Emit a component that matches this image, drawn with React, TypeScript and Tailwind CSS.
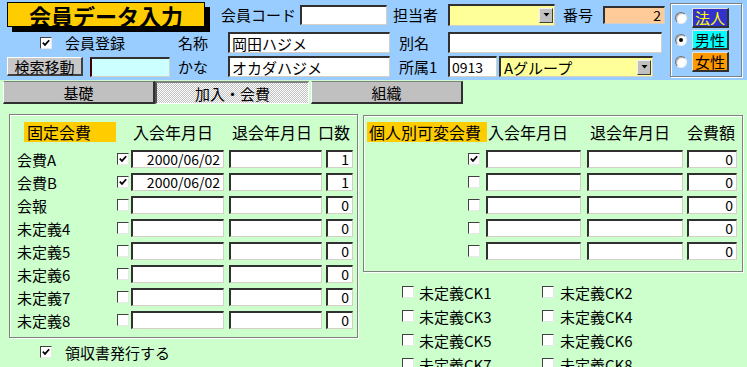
import React from "react";

function Check({ checked, className = "" }: { checked?: boolean; className?: string }) {
  return (
    <div
      className={`w-[12px] h-[12px] shrink-0 bg-white border-t border-l border-b border-r border-t-[#404040] border-l-[#404040] border-b-[#e8e8e8] border-r-[#e8e8e8] flex items-center justify-center ${className}`}
    >
      {checked && (
        <svg width="8" height="8" viewBox="0 0 8 8">
          <path d="M0.8 3.6 L3 5.9 L7.2 1.2" stroke="#000" strokeWidth="1.7" fill="none" />
        </svg>
      )}
    </div>
  );
}

function Field({
  className = "",
  children,
  right,
}: {
  className?: string;
  children?: React.ReactNode;
  right?: boolean;
}) {
  return (
    <div
      className={`shrink-0 border-t-2 border-l-2 border-b border-r border-t-[#303030] border-l-[#303030] border-b-[#d4d0c8] border-r-[#d4d0c8] flex items-center leading-[15px] whitespace-nowrap ${
        right ? "justify-end pr-[3px]" : "pl-[2px]"
      } ${className}`}
    >
      {children}
    </div>
  );
}

function DropBtn() {
  return (
    <div className="w-[14px] h-[15px] shrink-0 bg-[#c0c0c0] border-t border-l border-b border-r border-t-[#f0f0f0] border-l-[#f0f0f0] border-b-[#404040] border-r-[#404040] flex items-center justify-center">
      <svg width="7" height="4" viewBox="0 0 7 4">
        <path d="M0.5 0h6L3.5 3.5z" fill="#000" />
      </svg>
    </div>
  );
}

function Select({ className = "", text }: { className?: string; text?: string }) {
  return (
    <div
      className={`shrink-0 bg-[#ffff99] border-t-2 border-l-2 border-b border-r border-t-[#303030] border-l-[#303030] border-b-[#d4d0c8] border-r-[#d4d0c8] flex items-center justify-between pl-[3px] pr-[1px] text-[15px] leading-[15px] ${className}`}
    >
      <span>{text ?? ""}</span>
      <DropBtn />
    </div>
  );
}

function Radio({ on }: { on?: boolean }) {
  return (
    <div className="w-[12px] h-[12px] shrink-0 rounded-full bg-white border border-t-[#707070] border-l-[#707070] border-b-[#f0f0f0] border-r-[#f0f0f0] shadow-[inset_1px_1px_1px_#b0b0b0] flex items-center justify-center">
      {on && <div className="w-[4px] h-[4px] rounded-full bg-black" />}
    </div>
  );
}

const fixedRows: { label: string; checked: boolean; date: string; n: string }[] = [
  { label: "会費A", checked: true, date: "2000/06/02", n: "1" },
  { label: "会費B", checked: true, date: "2000/06/02", n: "1" },
  { label: "会報", checked: false, date: "", n: "0" },
  { label: "未定義4", checked: false, date: "", n: "0" },
  { label: "未定義5", checked: false, date: "", n: "0" },
  { label: "未定義6", checked: false, date: "", n: "0" },
  { label: "未定義7", checked: false, date: "", n: "0" },
  { label: "未定義8", checked: false, date: "", n: "0" },
];

const varRows = [true, false, false, false, false];

const ckRows = [
  ["未定義CK1", "未定義CK2"],
  ["未定義CK3", "未定義CK4"],
  ["未定義CK5", "未定義CK6"],
  ["未定義CK7", "未定義CK8"],
];

export default function App() {
  return (
    <div className="w-[747px] h-[367px] overflow-hidden bg-[#ccffcc] text-black font-['Noto_Sans_CJK_JP',sans-serif]">
      {/* header */}
      <div className="h-[80px] bg-[#99ccff] flex">
        <div className="w-[670px] flex flex-col">
          {/* row 1 */}
          <div className="mt-[2px] h-[25px] flex items-center">
            <div className="ml-[7px] w-[198px] h-[25px] shrink-0 bg-[#ffcc00] border border-black shadow-[5px_5px_0_#000] flex items-center justify-center text-[22px] font-bold leading-[22px]">
              会員データ入力
            </div>
            <div className="ml-[16px] w-[79px] text-[15px] leading-[15px]">会員コード</div>
            <Field className="w-[87px] h-[20px] bg-white" />
            <div className="ml-[6px] w-[55px] text-[15px] leading-[15px]">担当者</div>
            <Select className="w-[107px] h-[22px]" />
            <div className="ml-[8px] w-[40px] text-[15px] leading-[15px]">番号</div>
            <Field className="w-[62px] h-[18px] bg-[#ffcc99] text-[14px]" right>
              2
            </Field>
          </div>
          {/* row 2 */}
          <div className="mt-[5px] h-[21px] flex items-center">
            <Check checked className="ml-[40px]" />
            <div className="ml-[13px] w-[113px] text-[15px] leading-[15px]">会員登録</div>
            <div className="w-[50px] text-[15px] leading-[15px]">名称</div>
            <Field className="w-[162px] h-[21px] bg-white text-[15px]">岡田ハジメ</Field>
            <div className="ml-[9px] w-[49px] text-[15px] leading-[15px]">別名</div>
            <Field className="w-[214px] h-[21px] bg-white" />
          </div>
          {/* row 3 */}
          <div className="mt-[3px] h-[21px] flex items-center">
            <div className="ml-[7px] w-[76px] h-[19px] shrink-0 bg-[#c8c8c8] border-t border-l border-b-2 border-r-2 border-t-white border-l-white border-b-[#404040] border-r-[#404040] flex items-center justify-center text-[15px] leading-[15px]">
              検索移動
            </div>
            <Field className="ml-[7px] w-[80px] h-[20px] bg-[#ccffff] border-l-[#400000]" />
            <div className="ml-[8px] w-[50px] text-[15px] leading-[15px]">かな</div>
            <Field className="w-[162px] h-[21px] bg-white text-[15px]">オカダハジメ</Field>
            <div className="ml-[9px] w-[49px] text-[15px] leading-[15px]">所属1</div>
            <Field className="w-[49px] h-[21px] bg-white text-[14px]">0913</Field>
            <Select className="ml-[2px] w-[154px] h-[21px]" text="Aグループ" />
          </div>
        </div>
        {/* radio group */}
        <div className="mt-[3px] w-[72px] h-[74px] border border-[#808080] shadow-[inset_1px_1px_0_#ffffff,1px_1px_0_#ffffff] flex flex-col pt-[4px] gap-[2px]">
          <div className="h-[20px] flex items-center">
            <div className="ml-[4px]">
              <Radio />
            </div>
            <div className="ml-[5px] w-[37px] h-[20px] bg-[#3333cc] text-[#ffff00] border-t border-l border-b-2 border-r-2 border-t-[#e0e0e0] border-l-[#e0e0e0] border-b-[#303030] border-r-[#303030] flex items-center justify-center text-[15px] leading-[15px]">
              法人
            </div>
          </div>
          <div className="h-[20px] flex items-center">
            <div className="ml-[4px]">
              <Radio on />
            </div>
            <div className="ml-[5px] w-[37px] h-[20px] bg-[#00ffff] border-t border-l border-b-2 border-r-2 border-t-[#e0e0e0] border-l-[#e0e0e0] border-b-[#303030] border-r-[#303030] flex items-center justify-center text-[15px] leading-[15px]">
              男性
            </div>
          </div>
          <div className="h-[20px] flex items-center">
            <div className="ml-[4px]">
              <Radio />
            </div>
            <div className="ml-[5px] w-[37px] h-[20px] bg-[#ff9900] border-t border-l border-b-2 border-r-2 border-t-[#e0e0e0] border-l-[#e0e0e0] border-b-[#303030] border-r-[#303030] flex items-center justify-center text-[15px] leading-[15px]">
              女性
            </div>
          </div>
        </div>
      </div>

      {/* tabs */}
      <div className="h-[26px] flex items-start pt-[1px]">
        <div className="ml-[3px] w-[152px] h-[23px] bg-[#c0c0c0] border-t border-l border-b-2 border-r-2 border-t-[#808080] border-l-white border-b-[#303030] border-r-[#303030] flex items-center justify-center text-[15px] leading-[15px]">
          基礎
        </div>
        <div className="w-[154px] h-[23px] bg-[repeating-conic-gradient(#c0c0c0_0%_25%,#ffffff_0%_50%)] bg-[length:2px_2px] border-t-2 border-l-2 border-b border-r border-t-[#808080] border-l-[#505050] border-b-white border-r-white flex items-center justify-center text-[15px] leading-[15px]">
          加入・会費
        </div>
        <div className="ml-[2px] w-[152px] h-[23px] bg-[#c0c0c0] border-t border-l border-b-2 border-r-2 border-t-[#808080] border-l-white border-b-[#303030] border-r-[#303030] flex items-center justify-center text-[15px] leading-[15px]">
          組織
        </div>
      </div>

      {/* main */}
      <div className="flex">
        {/* left */}
        <div className="ml-[9px] mt-[8px] flex flex-col">
          <div className="w-[349px] h-[224px] border border-[#808080] shadow-[inset_1px_1px_0_#ffffff,1px_1px_0_#ffffff] flex flex-col">
            <div className="mt-[7px] h-[20px] flex items-center text-[16px] leading-[16px]">
              <div className="ml-[14px] w-[92px] h-[20px] bg-[#ffcc00] pl-[3px] flex items-center">固定会費</div>
              <div className="ml-[17px] w-[99px]">入会年月日</div>
              <div className="w-[86px]">退会年月日</div>
              <div>口数</div>
            </div>
            <div className="mt-[8px] flex flex-col gap-[5px]">
              {fixedRows.map((r) => (
                <div key={r.label} className="h-[18px] flex items-center">
                  <div className="ml-[7px] w-[100px] text-[15px] leading-[15px]">{r.label}</div>
                  <Check checked={r.checked} />
                  <Field className="ml-[2px] w-[93px] h-[18px] bg-white text-[14px]" right>
                    {r.date}
                  </Field>
                  <Field className="ml-[5px] w-[93px] h-[18px] bg-white" />
                  <Field className="ml-[4px] w-[27px] h-[18px] bg-white text-[14px]" right>
                    {r.n}
                  </Field>
                </div>
              ))}
            </div>
          </div>
          <div className="mt-[4px] h-[20px] flex items-center">
            <Check checked className="ml-[31px]" />
            <div className="ml-[13px] text-[15px] leading-[15px]">領収書発行する</div>
          </div>
        </div>

        {/* right */}
        <div className="ml-[5px] mt-[9px] flex flex-col">
          <div className="w-[380px] h-[157px] border border-[#808080] shadow-[inset_1px_1px_0_#ffffff,1px_1px_0_#ffffff] flex flex-col">
            <div className="mt-[6px] h-[20px] flex items-center text-[16px] leading-[16px]">
              <div className="ml-[3px] w-[120px] h-[20px] bg-[#ffcc00] pl-[2px] flex items-center">個人別可変会費</div>
              <div className="ml-[1px] w-[102px]">入会年月日</div>
              <div className="w-[97px]">退会年月日</div>
              <div>会費額</div>
            </div>
            <div className="mt-[8px] flex flex-col gap-[5px]">
              {varRows.map((c, i) => (
                <div key={i} className="h-[18px] flex items-center">
                  <Check checked={c} className="ml-[104px]" />
                  <Field className="ml-[6px] w-[95px] h-[18px] bg-white" />
                  <Field className="ml-[6px] w-[96px] h-[18px] bg-white" />
                  <Field className="ml-[4px] w-[50px] h-[18px] bg-white text-[14px]" right>
                    0
                  </Field>
                </div>
              ))}
            </div>
          </div>
          <div className="mt-[10px] flex flex-col gap-[4px]">
            {ckRows.map((row) => (
              <div key={row[0]} className="h-[20px] flex items-center">
                <div className="ml-[39px] w-[140px] flex items-center">
                  <Check />
                  <div className="ml-[5px] text-[15px] leading-[15px]">{row[0]}</div>
                </div>
                <div className="flex items-center">
                  <Check />
                  <div className="ml-[6px] text-[15px] leading-[15px]">{row[1]}</div>
                </div>
              </div>
            ))}
          </div>
        </div>
      </div>
    </div>
  );
}
